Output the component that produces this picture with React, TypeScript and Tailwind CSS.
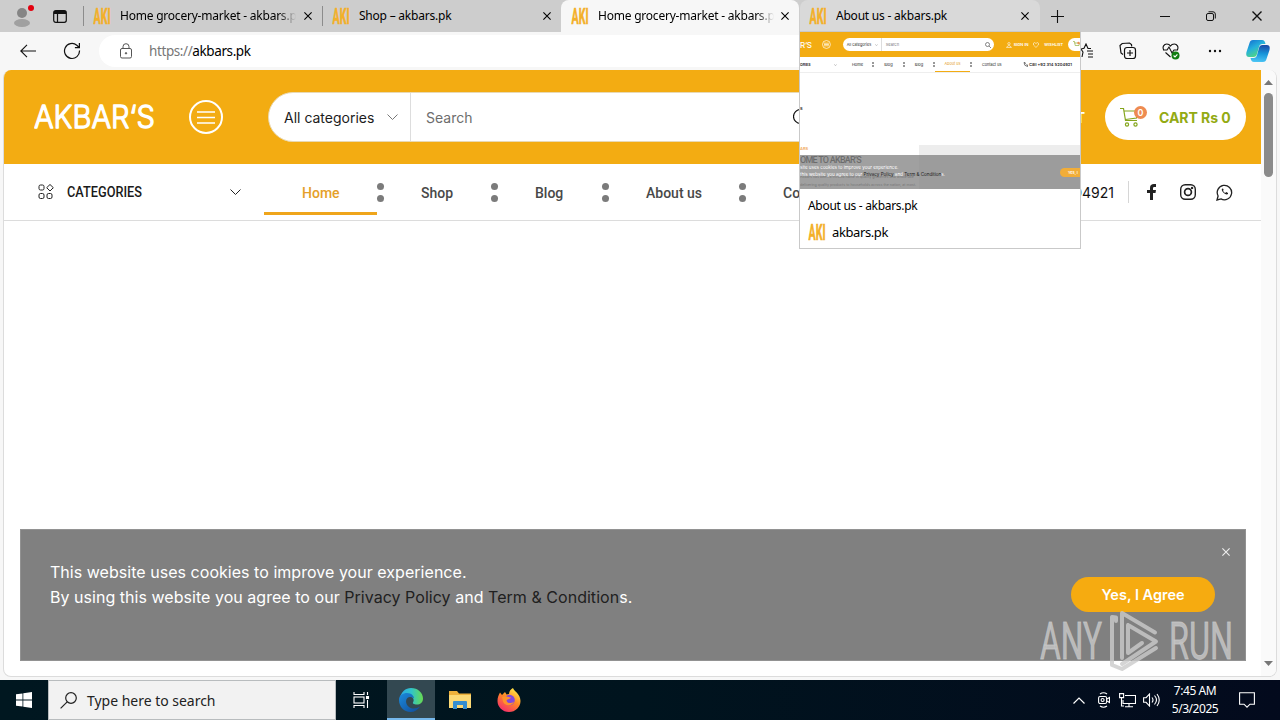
import React from 'react';
import clsx from 'clsx';

const ui = "font-['Noto_Sans','Open_Sans',sans-serif]";
const inter = "font-['Inter',sans-serif]";
const roboto = "font-['Roboto',sans-serif]";

const Favicon = () => (
  <svg width="18" height="18" viewBox="0 0 18 18" className="shrink-0">
    <text x="0.5" y="16.5" fontSize="22" fontWeight="700" fontFamily="Roboto" textLength="17" lengthAdjust="spacingAndGlyphs" fill="#f3b02a" stroke="#f3b02a" strokeWidth="0.6">AKI</text>
  </svg>
);

const Cross = ({ size = 8, className = '' }: { size?: number; className?: string }) => (
  <svg width={size} height={size} viewBox="0 0 8 8" className={clsx('shrink-0', className)} stroke="currentColor" strokeWidth="1.1">
    <path d="M0.4 0.4 7.6 7.6M7.6 0.4 0.4 7.6" />
  </svg>
);

const tabs = [
  { title: 'Home grocery-market - akbars.pk', state: 'idle' },
  { title: 'Shop – akbars.pk', state: 'idle' },
  { title: 'Home grocery-market - akbars.pk', state: 'active' },
  { title: 'About us - akbars.pk', state: 'hover' },
];

const TabStrip = () => (
  <div className="flex h-8 bg-[#cdcdcd]">
    <div className="flex w-[84px] items-center border-r border-[#8c8c8c] my-[6px]">
      <svg width="24" height="24" viewBox="0 0 24 24" className="ml-[10px]">
        <circle cx="12" cy="9" r="5" fill="#858585" />
        <ellipse cx="12" cy="19" rx="8" ry="4" fill="#a0a0a0" />
        <circle cx="21" cy="4" r="3" fill="#e3000f" />
      </svg>
      <svg width="14" height="13" viewBox="0 0 14 13" className="ml-[19px]" fill="none" stroke="#111" strokeWidth="1.2">
        <rect x="0.7" y="0.7" width="12.6" height="11.6" rx="2" />
        <path d="M1 2.5h12" strokeWidth="3" />
        <path d="M4.5 3v9" />
      </svg>
    </div>
    {tabs.map((tab, i) => (
      <div
        key={i}
        className={clsx(
          'flex items-center pl-[9px] pr-[10px]',
          i === 0 && 'w-[239px] border-r border-[#8c8c8c] my-[6px]',
          i === 1 && 'w-[238px]',
          i === 2 && 'w-[238px] rounded-t-lg bg-[#f7f7f7] pl-[10px] pr-[9px]',
          i === 3 && 'ml-[1px] w-[240px] rounded-t-lg bg-[#d9d9d9] pr-[11px]',
        )}
      >
        <Favicon />
        <span
          className={clsx(
            ui,
            'ml-[9px] w-[176px] overflow-hidden whitespace-nowrap text-[12px] leading-5 tracking-[-0.22px] text-black',
            tab.title.length > 25 && '[mask-image:linear-gradient(90deg,#000_90%,transparent)]',
          )}
        >
          {tab.title}
        </span>
        <Cross className="ml-auto text-black" />
      </div>
    ))}
    <div className="flex flex-1 items-center">
      <svg width="13" height="13" viewBox="0 0 13 13" className="ml-[11px]" stroke="#111" strokeWidth="1.1"><path d="M6.5 0v13M0 6.5h13" /></svg>
      <svg width="10" height="10" viewBox="0 0 10 10" className="ml-[96px]" stroke="#111" strokeWidth="1"><path d="M0 5.5h10" /></svg>
      <svg width="10" height="10" viewBox="0 0 10 10" className="ml-[36px]" stroke="#111" fill="none"><rect x="0.5" y="2.5" width="7" height="7" rx="1.5" /><path d="M2.5 0.8H7A2.3 2.3 0 0 1 9.3 3v4.5" /></svg>
      <Cross size={10} className="ml-[36px] text-[#111]" />
    </div>
  </div>
);

const Toolbar = () => (
  <div className="flex h-[38px] items-center bg-[#f7f7f7]">
    <svg width="16" height="14" viewBox="0 0 16 14" className="ml-5" fill="none" stroke="#111" strokeWidth="1.1"><path d="M16 7H1M7 0.8.8 7 7 13.2" /></svg>
    <svg width="18" height="18" viewBox="0 0 18 18" className="ml-[27px]" fill="none" stroke="#111" strokeWidth="1.2"><path d="M16.5 8.5A7.5 7.5 0 1 1 13.8 3.2L16 5.2M16.4 1v4.6h-4.5" /></svg>
    <div className="ml-[18px] flex h-8 flex-1 items-center rounded-l-full bg-white">
      <svg width="12" height="16" viewBox="0 0 12 16" className="ml-[21px]" fill="none" stroke="#555" strokeWidth="1"><rect x="0.5" y="5.5" width="11" height="9.5" rx="1.5" /><path d="M3 5.5V3.7a3 3 0 0 1 6 0v1.8" /><circle cx="6" cy="10.3" r="0.7" fill="#555" /></svg>
      <span className={clsx(ui, 'ml-[17px] text-[13.5px] tracking-[-0.4px] text-black')}><span className="text-[#777]">https://</span>akbars.pk</span>
    </div>
    <div className="flex w-[199px] items-center bg-[#f7f7f7]">
      <svg width="14" height="16" viewBox="0 0 14 16" className="mr-[2px]" fill="none" stroke="#111" strokeWidth="1.1"><path d="M1 14l1-5L0 6l3-.8L5 1l2 4.500h3M6 8h6M7 11h5M7 14h5" /></svg>
      <svg width="18" height="18" viewBox="0 0 18 18" className="ml-[22px]" fill="none" stroke="#111" strokeWidth="1.2"><path d="M4 12.5 2 11 1 3.5 3.2 1.5 10.5 1l2 1.5.2 2" /><rect x="5.5" y="5.5" width="11" height="11" rx="2.5" /><path d="M11 8v6M8 11h6" /></svg>
      <svg width="18" height="18" viewBox="0 0 18 18" className="ml-[25px]" fill="none" stroke="#111" strokeWidth="1.1"><path d="M1.8 8C0 5 2 2 4.8 2 7 2 8 3.2 8.5 4 9 3.2 10 2 12.3 2 15 2 17 5 15.3 8M3.5 10.5 8.5 15M1 8h4l2-3 3 6 2-3h4" /><circle cx="13.5" cy="13.5" r="4" fill="#107c10" stroke="none" /><path d="m11.6 13.5 1.4 1.4 2.4-2.6" stroke="#fff" /></svg>
      <svg width="14" height="4" viewBox="0 0 14 4" className="ml-[28px]" fill="#111"><circle cx="2" cy="2" r="1.2" /><circle cx="7" cy="2" r="1.2" /><circle cx="12" cy="2" r="1.2" /></svg>
      <svg width="24" height="22" viewBox="0 0 24 22" className="ml-[24px]">
        <defs>
          <linearGradient id="cpl" x1="0" y1="0" x2="0.6" y2="1"><stop offset="0" stopColor="#1269cf" /><stop offset="0.5" stopColor="#25b0dc" /><stop offset="1" stopColor="#57dd75" /></linearGradient>
          <linearGradient id="cpr" x1="0.5" y1="0" x2="0.4" y2="1"><stop offset="0" stopColor="#1b4ba8" /><stop offset="0.5" stopColor="#1695da" /><stop offset="1" stopColor="#4cc5f4" /></linearGradient>
        </defs>
        <path d="M7 0h9c2 0 3 1.500 3.500 4h-3c-2 0-3 1-3.500 3l-2 7c-.5 2-1.500 3-3.500 3H3c-3 0-3-3-2.500-5L3.500 3C4 1 5 0 7 0z" fill="url(#cpl)" />
        <path d="M17 22H8c-2 0-3-1.500-3.500-4h3c2 0 3-1 3.500-3l2-7c.5-2 1.500-3 3.500-3H21c3 0 3 3 2.500 5l-3 9c-.5 2-1.500 3-3.500 3z" fill="url(#cpr)" />
      </svg>
    </div>
  </div>
);

const Chevron = ({ className = '' }: { className?: string }) => (
  <svg width="11" height="6" viewBox="0 0 11 6" fill="none" stroke="currentColor" className={className}><path d="M0.5 0.5l5 5 5-5" /></svg>
);

const SiteHeader = () => (
  <div className="flex h-[94px] items-center bg-[#f3ac12]">
    <svg width="122" height="30" viewBox="0 0 122 30" className="ml-[30px]">
      <text x="0" y="25.500" fontFamily="Inter" fontWeight="300" fontSize="31" textLength="121" lengthAdjust="spacingAndGlyphs" fill="#fff" stroke="#fff" strokeWidth="1.300" strokeLinejoin="round">AKBAR‘S</text>
    </svg>
    <svg width="34" height="34" viewBox="0 0 34 34" className="ml-[33px]" fill="none" stroke="#fff"><circle cx="17" cy="17" r="16" strokeWidth="2" /><path d="M8 12h18M8 17.500h18M8 23h18" strokeWidth="1.500" /></svg>
    <div className="ml-[45px] flex h-[50px] w-[566px] items-center rounded-full border border-[#e8d9b4] bg-white">
      <div className={clsx(inter, 'flex h-full w-[142px] items-center border-r border-[#ddd] pl-[15px] text-[14px] text-[#1c1c1c]')}>
        All categories
        <Chevron className="ml-auto mr-[12px] text-[#777]" />
      </div>
      <span className={clsx(inter, 'pl-[15px] text-[14px] text-[#6d6d6d]')}>Search</span>
      <svg width="17" height="17" viewBox="0 0 17 17" className="ml-auto mr-[23px]" fill="none" stroke="#111" strokeWidth="1.200"><circle cx="7.500" cy="7.500" r="7" /><path d="m13 13 4 4" /></svg>
    </div>
    <span className={clsx(inter, 'ml-auto text-[14px] font-bold text-white')}>WISHLIST</span>
    <div className="ml-[20px] mr-[15px] flex h-[46px] w-[141px] items-center rounded-full bg-white">
      <div className="relative ml-[15px] h-[20px] w-[27px]">
        <svg width="20" height="20" viewBox="0 0 20 20" fill="none" stroke="#84a51c" strokeWidth="1.200"><path d="M0 1.500h3.500l2 12h11.500M4 4h14l-1.500 7-11 1.500" /><circle cx="7" cy="17.500" r="1.600" /><circle cx="15.500" cy="17.500" r="1.600" /></svg>
        <span className={clsx(inter, 'absolute -top-[1px] left-[14px] h-[13px] w-[13px] rounded-full bg-[#ee8b51] text-center text-[9px] font-semibold leading-[13px] text-white')}>0</span>
      </div>
      <span className={clsx(inter, 'ml-[12px] whitespace-nowrap text-[14px] font-bold tracking-[-0.05px] text-[#93aa13]')}>CART Rs 0</span>
    </div>
  </div>
);

const Dots = () => (
  <div className="flex w-[7px] flex-col items-center gap-[5px]">
    <span className="h-[7px] w-[7px] rounded-full bg-[#7b7b7b]" />
    <span className="h-[7px] w-[7px] rounded-full bg-[#7b7b7b]" />
  </div>
);

const menu = [
  { label: 'Home', width: 'w-[113px]' },
  { label: 'Shop', width: 'w-[107px]' },
  { label: 'Blog', width: 'w-[104px]' },
  { label: 'About us', width: 'w-[130px]' },
  { label: 'Contact us', width: 'w-[145px]' },
];

const SiteNav = () => (
  <div className="flex h-[57px] items-center border-b border-[#dcdcdc] bg-white">
    <div className="flex w-[260px] items-center">
      <svg width="16" height="16" viewBox="0 0 16 16" className="ml-[34px]" fill="none" stroke="#222"><rect x="1" y="1" width="5" height="5" rx="1.500" /><path d="m12 .5 3.300 3.200L12 7 8.700 3.700z" /><rect x="1" y="9.500" width="5" height="5" rx="1.500" /><rect x="9" y="9.500" width="5" height="5" rx="1.500" /></svg>
      <svg width="76" height="18" viewBox="0 0 76 18" className="ml-[13px]">
        <text x="0" y="14" fontFamily="Roboto" fontWeight="500" fontSize="15" textLength="75" lengthAdjust="spacingAndGlyphs" fill="#1a1a1a">CATEGORIES</text>
      </svg>
      <Chevron className="ml-[87px] text-[#222]" />
    </div>
    {menu.map((item, i) => (
      <React.Fragment key={item.label}>
        <div
          className={clsx(
            roboto,
            'flex h-[46px] items-center whitespace-nowrap border-b-[3px] pt-[8px] pb-[3px] pl-[37px] text-[14px] font-medium',
            item.width,
            i === 0 ? 'border-[#efa51b] pl-[38px] text-[#e5a02a]' : 'border-transparent text-[#484848]',
          )}
        >
          {item.label}
        </div>
        {i < 4 && <Dots />}
      </React.Fragment>
    ))}
    <span className={clsx(inter, 'ml-auto whitespace-nowrap text-[14px] text-[#111]')}>Call +92 314 5204921</span>
    <div className="ml-[14px] flex h-[22px] items-center border-l border-[#d6d6d6] pl-[17px] pr-[28px]">
      <svg width="12" height="16" viewBox="0 0 12 16" fill="#222"><path d="M4 16V9H1V6h3V4c0-3 1.500-4 4-4h2v3H8.500C7.300 3 7 3.500 7 4.500V6h3L9.500 9H7v7z" /></svg>
      <svg width="16" height="16" viewBox="0 0 16 16" className="ml-[22px]" fill="none" stroke="#222" strokeWidth="1.400"><rect x="0.700" y="0.700" width="14.600" height="14.600" rx="4.500" /><circle cx="8" cy="8" r="3.400" strokeWidth="1.700" /><circle cx="12.100" cy="3.900" r="0.500" fill="#222" /></svg>
      <svg width="17" height="17" viewBox="0 0 17 17" className="ml-[20px]" fill="none" stroke="#222" strokeWidth="1.300"><path d="m1 16 1.100-4A7.200 7.200 0 1 1 5 14.900z" /><path d="M6 4.800c-1.500 2 3.800 7.200 6 5.300v-1L10.200 8l-1 .9C8 8.300 7.500 7.500 7 6.700l.7-.8L7 4.500z" fill="#222" stroke="none" /></svg>
    </div>
  </div>
);

const CookieBar = () => (
  <div className={clsx(inter, 'ml-4 mr-[15px] mb-[15px] flex h-[132px] items-start border border-[#929292] bg-[#808080] text-white')}>
    <p className="ml-[29px] mt-[30px] whitespace-nowrap text-[16px] leading-[25px] tracking-[0.035px]">
      This website uses cookies to improve your experience.
      <br />
      By using this website you agree to our <span className="text-[#202020]">Privacy Policy</span> and <span className="text-[#202020]">Term &amp; Condition</span>s.
    </p>
    <div className="ml-auto flex flex-col items-end pr-[15px] pt-[18px]">
      <Cross size={8} className="text-[#eee]" />
      <button className="mr-[15px] mt-[21px] h-[35px] w-[144px] rounded-full bg-[#f6ab10] text-[14.5px] font-semibold text-white">Yes, I Agree</button>
    </div>
  </div>
);

const Watermark = () => (
  <svg width="200" height="66" viewBox="0 0 200 66" className="absolute left-[1036px] top-[608px]">
    <g fill="#cbcbcb" fillOpacity="0.800" stroke="#cbcbcb" strokeOpacity="0.700" strokeWidth="0.800" fontFamily="Roboto" fontWeight="400" fontSize="52">
      <text x="4" y="51" textLength="62" lengthAdjust="spacingAndGlyphs">ANY</text>
      <text x="133" y="51" textLength="64" lengthAdjust="spacingAndGlyphs">RUN</text>
    </g>
    <g fill="none" stroke="#cbcbcb" strokeOpacity="0.800" strokeWidth="4" strokeLinejoin="round" strokeLinecap="round">
      <path d="M80 13V9.500l-4-.5V57l10 4 34-21" />
      <path d="M86 50V5l33 19.500M92 17l28 16.500-34 22.500M92 17v28l14-10" />
    </g>
  </svg>
);

const Website = () => (
  <div className="mx-[3px] flex h-[607px] overflow-hidden rounded-lg border border-t-0 border-[#dcdcdc] bg-white">
    <div className="flex w-[1257px] flex-col">
      <SiteHeader />
      <SiteNav />
      <div className="flex-1" />
      <CookieBar />
    </div>
    <div className="flex flex-1 flex-col items-center bg-[#fafafa]">
      <svg width="9" height="5" viewBox="0 0 9 5" className="mt-[10px]" fill="#777"><path d="M0 5h9L4.500 0z" /></svg>
      <div className="mt-[8px] h-[84px] w-[9px] rounded-full bg-[#8b8b8b]" />
      <svg width="9" height="5" viewBox="0 0 9 5" className="mt-auto mb-[10px]" fill="#777"><path d="M0 0h9L4.500 5z" /></svg>
    </div>
  </div>
);

const MiniDots = () => (
  <span className="flex w-[2px] flex-col gap-[1px]">
    <span className="h-[2px] w-[2px] rounded-full bg-[#777]" />
    <span className="h-[2px] w-[2px] rounded-full bg-[#777]" />
  </span>
);

// Hover card of the "About us" tab with a scaled down view of its page
const TabPreview = () => (
  <div className="absolute left-[799px] top-[31px] h-[218px] w-[282px] overflow-hidden border border-[#c9c9c9] bg-white">
    <div className={clsx(inter, 'flex h-[157px] flex-col whitespace-nowrap text-[4px] leading-[6px] text-[#222]')}>
      <div className="flex h-[25px] items-center bg-[#f3ac12] text-white">
        <span className="w-[13px] text-[8px] font-medium tracking-[-0.3px]">R‘S</span>
        <svg width="9" height="9" viewBox="0 0 9 9" className="ml-[9px]" fill="none" stroke="#fff" strokeWidth="0.700"><circle cx="4.500" cy="4.500" r="4" /><path d="M2 3.200h5M2 4.500h5M2 5.800h5" /></svg>
        <div className="ml-[12px] flex h-[13px] w-[151px] shrink-0 items-center rounded-full bg-white text-[#333]">
          <span className="ml-[4px] w-[28px] text-[3.8px]">All categories</span>
          <Chevron className="h-[2px] w-[3px]" />
          <span className="ml-[3px] border-l border-[#ddd] pl-[4px] leading-[13px] text-[#777]">Search</span>
          <svg width="6" height="6" viewBox="0 0 6 6" className="ml-auto mr-[3px]" fill="none" stroke="#555" strokeWidth="0.700"><circle cx="2.500" cy="2.500" r="2" /><path d="m4 4 2 2" /></svg>
        </div>
        <svg width="6" height="6" viewBox="0 0 6 6" className="ml-[12px]" fill="none" stroke="#fff" strokeWidth="0.600"><circle cx="3" cy="1.700" r="1.200" /><path d="M.5 5.500q2.500-4 5 0z" /></svg>
        <span className="ml-[2px] w-[20px] font-semibold">SIGN IN</span>
        <svg width="6" height="6" viewBox="0 0 6 6" fill="none" stroke="#fff" strokeWidth="0.600"><path d="M3 5.500.5 3Q0 .5 1.500.5L3 1.500 4.500.5Q6 .5 5.500 3z" /></svg>
        <span className="ml-[5px] w-[24px] text-[3.9px] font-semibold">WISHLIST</span>
        <div className="flex h-[13px] flex-1 items-center rounded-l-full bg-white pl-[5px]">
          <svg width="7" height="7" viewBox="0 0 7 7" fill="none" stroke="#84a51c" strokeWidth="0.600"><path d="M0 .5h1.500l.7 4H6L6.500 2h-5" /><circle cx="5.500" cy="2" r="1.200" fill="#ee8b51" stroke="none" /></svg>
        </div>
      </div>
      <div className="flex h-[16px] items-center border-b border-[#eee] text-[4px]">
        <span className="w-[34px] text-[3.6px] font-semibold">ORIES</span>
        <Chevron className="h-[2px] w-[3px]" />
        <span className="ml-[6px] flex w-[29px] justify-center">Home</span><MiniDots />
        <span className="flex w-[29px] justify-center">Blog</span><MiniDots />
        <span className="flex w-[28px] justify-center">Blog</span><MiniDots />
        <span className="flex h-[14px] w-[35px] items-center justify-center border-b border-[#f3ac12] text-[3.8px] text-[#e5a02a]">About us</span><MiniDots />
        <span className="ml-[10px] w-[41px] text-[3.8px]">Contact us</span>
        <svg width="5" height="5" viewBox="0 0 5 5" fill="none" stroke="#222" strokeWidth="0.600"><path d="M1 .5q0 3.500 3.500 4l.2-1.500-1.400-.3M1 .5l1.200.2.2 1.200" /></svg>
        <span className="ml-[1px] text-[4.1px] font-semibold">Call +92 314 5204921</span>
      </div>
      <div className="flex h-[72px] items-center font-semibold">S</div>
      <div className="relative flex-1">
        <div className="ml-[119px] h-full bg-[#ededed]" />
        <div className="absolute inset-0">
          <p className="pt-[1px] font-semibold text-[#f0a85a]">ARS</p>
          <p className={clsx(roboto, 'mt-[3px] text-[9px] font-medium leading-[11px] tracking-[-0.75px] text-[#333]')}>OME TO AKBAR‘S</p>
          <p className="mt-[8px] text-[3.6px] text-[#555]">Akbars has been a trusted name in quality groceries and wholesale</p>
          <p className="mt-[2px] text-[3.6px] text-[#555]">delivering quality products to households across the nation, at most.</p>
        </div>
        <div className="absolute inset-x-0 bottom-0 flex h-[34px] items-center justify-between bg-[#808080]/75 text-[4.55px] leading-[7px] text-white">
          <p className="pb-[3px]">
            site uses cookies to improve your experience.
            <br />
            this website you agree to our <span className="text-[#222]">Privacy Policy</span> and <span className="text-[#222]">Term &amp; Condition</span>s.
          </p>
          <span className="flex h-[9px] w-[20px] items-center rounded-l-full bg-[#f1ad38] pl-[8px] text-[3.8px] font-semibold">Yes, I</span>
        </div>
      </div>
    </div>
    <div className={clsx(ui, 'px-2 text-black')}>
      <p className="mt-[8px] text-[12px] leading-[18px] tracking-[-0.3px]">About us - akbars.pk</p>
      <div className="mt-[6px] flex items-center">
        <Favicon />
        <span className="ml-[6px] text-[13px] leading-[22px] tracking-[-0.4px]">akbars.pk</span>
      </div>
    </div>
  </div>
);

const Taskbar = () => (
  <div className={clsx(ui, 'flex h-10 items-stretch bg-gradient-to-r from-[#001720] via-[#00141e] to-[#030a1d] text-white')}>
    <div className="flex w-12 items-center justify-center">
      <svg width="16" height="16" viewBox="0 0 16 16" fill="#fff"><path d="M0 2.300 6.500 1.400V7.600H0zM7.300 1.200 16 0v7.600H7.300zM0 8.400h6.500v6.200L0 13.700zM7.300 8.400H16V16l-8.700-1.200z" /></svg>
    </div>
    <div className="flex w-72 items-center border border-[#b8bcbe] bg-[#f2f2f2]">
      <svg width="17" height="17" viewBox="0 0 17 17" className="ml-[11px]" fill="none" stroke="#222" strokeWidth="1.200"><circle cx="11" cy="6" r="5.300" /><path d="M7.200 9.800.6 16.400" /></svg>
      <span className="ml-[10px] text-[14px] tracking-[-0.02px] text-[#222]">Type here to search</span>
    </div>
    <div className="flex w-[51px] items-center justify-center">
      <svg width="17" height="16" viewBox="0 0 17 16" fill="none" stroke="#fff" strokeWidth="1.100"><path d="M1 0v2.500h10V0M1 16v-2.500h10V16M14.500 0v3M14.500 8v8" /><rect x="1" y="5" width="10" height="6" /><rect x="13.500" y="4.500" width="2" height="2" fill="#fff" /></svg>
    </div>
    <div className="flex w-12 items-center justify-center border-b-2 border-[#76b9ed] bg-[#334851] pt-[2px]">
      <svg width="24" height="24" viewBox="0 0 24 24">
        <defs>
          <linearGradient id="edgeTop" x1="0" y1="0.500" x2="1" y2="0.500"><stop offset="0" stopColor="#2ba8e6" /><stop offset="0.500" stopColor="#31c4c8" /><stop offset="1" stopColor="#68db50" /></linearGradient>
          <linearGradient id="edgeLow" x1="0" y1="0" x2="1" y2="1"><stop offset="0" stopColor="#1b8bdc" /><stop offset="1" stopColor="#114a98" /></linearGradient>
        </defs>
        <path d="M1 10C2 4 6.500 0 12 0c7 0 12 5 12 10.500 0 4-3 6-6 6-3.500 0-4.500-1.200-4-2 2-3-.5-6.500-4-6.500C6 8 2.500 9 1 10z" fill="url(#edgeTop)" />
        <path d="M0 12c0-5 4-7 8-7 4.500 0 7 3 7 5.500 0 0-2-2-4.500-1.500C6 10 6 16 10 19c3.500 2.500 8 1.500 11-.5-2 3.500-5.500 5.500-9.500 5.500C5 24 0 18.500 0 12z" fill="url(#edgeLow)" />
      </svg>
    </div>
    <div className="flex w-[50px] items-center justify-center">
      <svg width="22" height="18" viewBox="0 0 22 18"><path d="M0 0h8l2 2.500h12V17H0z" fill="#eeb13b" /><path d="M0 4h22v13H0z" fill="#fcd975" /><path d="M4 18v-7q0-1 1-1h12q1 0 1 1v7h-4v-4H8v4z" fill="#348ed0" /></svg>
    </div>
    <div className="flex w-12 items-center justify-center">
      <svg width="24" height="24" viewBox="0 0 24 24">
        <defs><linearGradient id="fox" x1="0.800" y1="0" x2="0.200" y2="1"><stop offset="0" stopColor="#fff04a" /><stop offset="0.450" stopColor="#ff8a25" /><stop offset="1" stopColor="#f52670" /></linearGradient></defs>
        <path d="M3 4.500 5 7l3-3 1.500 2.500L12 6c0-3 2-5 4-6 .5 3 7.500 5.500 7.500 13C23.500 19 18.500 24 12 24S.5 19 .5 13C.5 9.500 1.500 7 3 4.500z" fill="url(#fox)" />
        <circle cx="12.500" cy="12" r="5.300" fill="#8148dc" />
        <path d="M5 9c3-2 6 0 9 .5-1 2-3.500 1.500-4.500 3 1 3.500 5 3 7.500 1-1 4.500-9 5.500-11 0z" fill="#ff922b" />
      </svg>
    </div>
    <div className="ml-auto flex items-center">
      <svg width="12" height="7" viewBox="0 0 12 7" fill="none" stroke="#fff" strokeWidth="1.200"><path d="m.5 6.500 5.500-5.500 5.500 5.500" /></svg>
      <svg width="12" height="16" viewBox="0 0 12 16" className="ml-[13px]" fill="none" stroke="#fff" strokeWidth="1.100"><path d="M2 2Q5.500-.5 9 2M2 14q3.500 2.500 7 0M9 7l2.500-1.500v5L9 9" /><rect x="0.600" y="4.500" width="8" height="7" rx="1.500" /><circle cx="4.600" cy="8" r="1.500" /></svg>
      <svg width="17" height="15" viewBox="0 0 17 15" className="ml-[9px]" fill="none" stroke="#fff" strokeWidth="1.100"><path d="M6 2.500h10.500v8H4V7M10 10.500v3M6 13.700h8" /><path d="M.6.600h4v4h-4zM2.500 4.600V13H5" /></svg>
      <svg width="17" height="14" viewBox="0 0 17 14" className="ml-[7px]" fill="none" stroke="#fff" strokeWidth="1.100"><path d="M.6 4.700h2.500L6.500 1v12L3.100 9.300H.6zM9 4.500q2 2.500 0 5M11.500 2.500q4 4.500 0 9M14 1q4.500 6 0 12" /></svg>
      <div className="ml-[9px] w-[52px] text-center text-[12px] leading-[18px] tracking-[-0.45px] whitespace-nowrap">
        <p>7:45 AM</p>
        <p>5/3/2025</p>
      </div>
      <svg width="16" height="16" viewBox="0 0 16 16" className="ml-[18px] mr-[25px]" fill="none" stroke="#fff" strokeWidth="1.100"><path d="M.6.700h14.800v11.500H11L8 15.200l-3-3H.6z" /></svg>
    </div>
  </div>
);

const App = () => {
  return (
    <div className="relative h-[720px] w-[1280px] overflow-hidden bg-[#f7f7f7]">
      <TabStrip />
      <Toolbar />
      <Website />
      <div className="h-[3px]" />
      <Taskbar />
      <TabPreview />
      <Watermark />
    </div>
  );
};

export default App;
